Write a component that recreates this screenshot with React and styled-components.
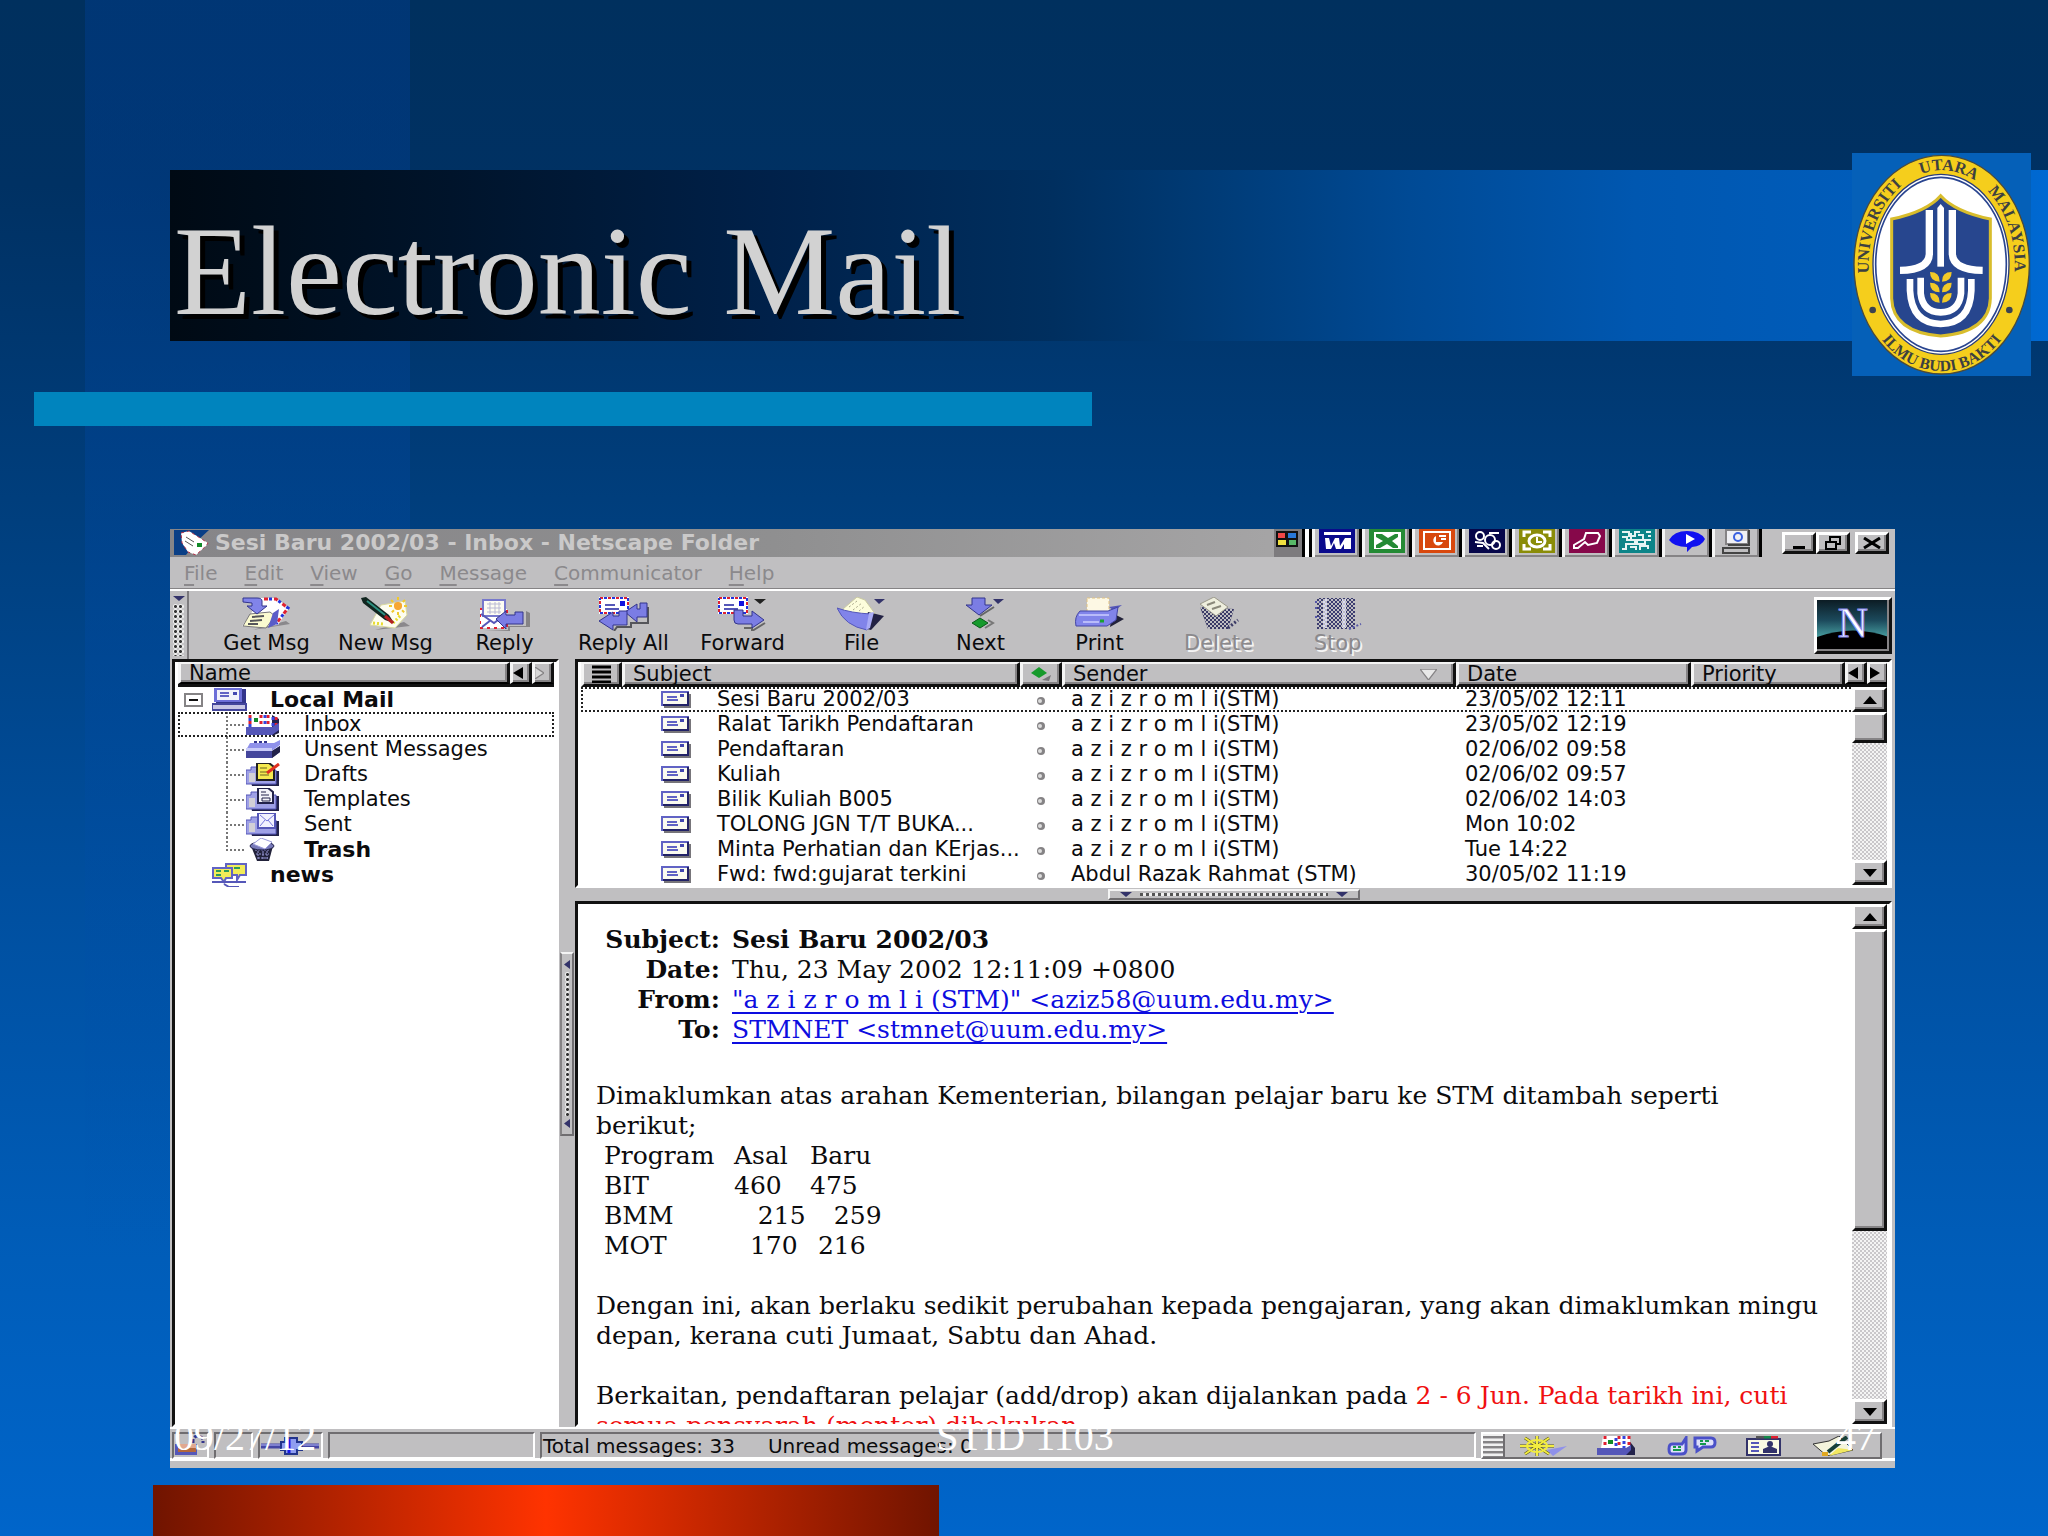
import React from 'react';
import styled, { createGlobalStyle, css } from 'styled-components';

const sans = '"DejaVu Sans", sans-serif';
const serif = '"DejaVu Serif", serif';
const slideSerif = '"Liberation Serif", serif';
const gray = '#c0bfc1';

const Global = createGlobalStyle`
  *, *::before, *::after { box-sizing: border-box; }
  body { margin: 0; }
  button { font: inherit; color: inherit; margin: 0; padding: 0; }
`;

const raised = css`
  background: ${gray};
  border: 3px solid;
  border-color: #fff #111 #111 #fff;
  box-shadow: inset -2px -2px 0 #858385;
`;

const sunken = css`
  border: 2px solid;
  border-color: #6f6d70 #fff #fff #6f6d70;
`;

/* ---------- slide ---------- */

const Slide = styled.div`
  position: relative;
  display: flex;
  flex-direction: column;
  height: 100vh;
  overflow: hidden;
  background:
    linear-gradient(180deg, rgba(0, 66, 160, 0.34), rgba(0, 76, 170, 0.3) 40%, rgba(0, 90, 190, 0) 82%) 85px 0 / 325px 100% no-repeat,
    linear-gradient(180deg, #00305e 0%, #003163 12%, #00376f 22%, #003f7e 34%, #004f9f 58%, #005db9 82%, #0065ca 100%);
`;

const Banner = styled.header`
  position: relative;
  flex: none;
  margin: 170px 0 0 170px;
  padding: 33px 4px 0;
  height: 171px;
  background: linear-gradient(90deg, #000a14 0%, #00142b 15%, #00214a 32%, #002f5f 47%, #003c78 56%, #004a95 66%, #0057b0 78%, #005cba 90%, #0069d2 100%);
`;

const Title = styled.h1`
  margin: 0;
  font: 400 126px/138px ${slideSerif};
  color: #d2d2d2;
  text-shadow: 5px 5px 0 #000;
`;

const Crest = styled.svg`
  position: absolute;
  top: -17px;
  right: 17px;
  width: 179px;
  height: 223px;
`;

const Rule = styled.div`
  flex: none;
  width: 1058px;
  height: 34px;
  margin: 51px 0 103px 34px;
  background: #0084be;
`;

const RedBar = styled.div`
  flex: none;
  width: 786px;
  height: 51px;
  margin: 17px 0 0 153px;
  background: linear-gradient(90deg, #701400, #ff3300 50%, #701400);
`;

const SlideFooter = styled.footer`
  position: absolute;
  left: 174px;
  right: 172px;
  bottom: 77px;
  display: grid;
  grid-template-columns: 1fr auto 1fr;
  font: 400 40px/44px ${slideSerif};
  color: #fff;
  pointer-events: none;
  span:last-child { text-align: right; }
`;

/* ---------- application window ---------- */

const Window = styled.main`
  flex: 1;
  min-height: 0;
  margin: 0 153px 0 170px;
  display: flex;
  flex-direction: column;
  background: ${gray};
  font: 400 21px/25px ${sans};
  color: #0b0b0d;
`;

const TitleBar = styled.div`
  display: flex;
  flex: none;
  align-items: stretch;
  height: 28px;
  padding: 0 6px 0 4px;
  background: linear-gradient(90deg, #868588 0%, #8f8f90 35%, #a6a5a6 65%, #c0bfc1 90%);
`;

const WindowTitle = styled.span`
  flex: 1;
  padding-left: 6px;
  font-size: 22px;
  font-weight: 700;
  line-height: 28px;
  color: #cac9c9;
  white-space: nowrap;
`;

const StartCell = styled.span`
  width: 28px;
  background: #7d7b7e;
`;

const Divider = styled.span`
  width: 10px;
  border-left: 3px solid #000;
  background: #fff;
  border-right: 3px solid #000;
`;

const AppButton = styled.button`
  display: flex;
  justify-content: center;
  width: 50px;
  border: 0;
  border-left: 3px solid #f4f4f4;
  border-right: 3px solid #000;
  background: ${gray};
  box-shadow: inset -2px -2px 0 #858385;
`;

const WindowButtons = styled.div`
  display: flex;
  align-items: flex-end;
  height: 25px;
  padding-left: 20px;
`;

const WindowButton = styled.button`
  ${raised}
  display: grid;
  place-items: center;
  width: 34px;
  height: 22px;
  margin-left: ${(p) => (p.$apart ? '5px' : '0')};
`;

const MenuBar = styled.nav`
  display: flex;
  flex: none;
  gap: 27px;
  height: 32px;
  padding-left: 14px;
  font-size: 20px;
  line-height: 32px;
  color: #8b898c;
`;

const MenuItem = styled.button`
  border: 0;
  background: none;
  &::first-letter { text-decoration: underline; text-underline-offset: 4px; }
`;

const Toolbar = styled.div`
  display: flex;
  flex: none;
  height: 70px;
  border-top: 2px solid #fff;
  box-shadow: 0 -1px 0 #858385;
`;

const Grip = styled.div`
  display: flex;
  flex-direction: column;
  align-items: center;
  width: 19px;
  margin-right: 18px;
  padding-top: 5px;
  border-right: 2px solid #7c7a7d;
`;

const Dots = styled.span`
  flex: 1;
  align-self: stretch;
  margin: 3px;
  background: radial-gradient(circle, #333 1px, #efefef 2px, transparent 3px) 0 0 / 5px 5px;
`;

const ToolButton = styled.button`
  display: flex;
  flex-direction: column;
  align-items: center;
  width: 119px;
  padding-top: 6px;
  border: 0;
  background: none;
  line-height: 24px;
  color: ${(p) => (p.disabled ? '#8b898c' : '#0b0b0d')};
  text-shadow: ${(p) => (p.disabled ? '2px 2px 0 #f4f4f4' : 'none')};
  white-space: nowrap;
`;

const Throbber = styled.div`
  ${raised}
  width: 78px;
  height: 57px;
  margin: 6px 3px 0 auto;
`;

const Workspace = styled.div`
  flex: 1;
  min-height: 0;
  display: flex;
  padding-left: 2px;
`;

const Folders = styled.aside`
  width: 387px;
  flex: none;
  border: 3px solid;
  border-color: #111 #fff #fff #111;
  background: #fff;
  padding: 0 2px 0 3px;
`;

const HeadBar = styled.div`
  display: flex;
  height: 25px;
  border-bottom: 3px solid #111;
`;

const headCell = css`
  background: ${gray};
  border-top: 2px solid #f4f4f4;
  border-left: 3px solid #f4f4f4;
  border-right: 3px solid #111;
  box-shadow: inset -2px -2px 0 #858385;
  font-weight: 400;
  text-align: left;
`;

const HeadButton = styled.button`
  ${headCell}
  flex: ${(p) => (p.$grow ? '1' : '0 0 22px')};
  padding-left: ${(p) => (p.$grow ? '8px' : '0')};
  display: flex;
  align-items: center;
  line-height: 20px;
`;

const Tree = styled.ul`
  list-style: none;
  margin: 0;
  padding: 0;
`;

const TreeRow = styled.div`
  display: flex;
  align-items: center;
  height: 25px;
  padding-left: ${(p) => (p.$level === 2 ? '48px' : p.$expandable ? '6px' : '34px')};
  font-weight: ${(p) => (p.$bold ? 700 : 400)};
  font-size: ${(p) => (p.$bold ? '22px' : '21px')};
  outline: ${(p) => (p.$selected ? '2px dotted #222' : 'none')};
  outline-offset: -2px;
  svg { margin-right: 23px; flex: none; }
`;

const Expander = styled.button`
  display: grid;
  place-items: center;
  width: 19px;
  height: 14px;
  margin-right: 9px;
  border: 2px solid #858385;
  background: #fff;
  &::before { content: ''; width: 9px; height: 2px; background: #111; }
`;

const Branch = styled.span`
  align-self: stretch;
  width: 20px;
  background:
    repeating-linear-gradient(180deg, #777 0 2px, transparent 2px 4px) 0 0 / 2px ${(p) => (p.$last ? '50%' : '100%')} no-repeat,
    repeating-linear-gradient(90deg, #777 0 2px, transparent 2px 4px) 0 50% / 100% 2px no-repeat;
`;

const SideSplitter = styled.div`
  display: flex;
  flex-direction: column;
  flex: none;
  width: 16px;
`;

const SideHandle = styled.div`
  display: flex;
  flex-direction: column;
  align-items: center;
  height: 184px;
  margin: 293px 1px 0;
  padding: 6px 0;
  border: 2px solid;
  border-color: #f4f4f4 #6f6d70 #6f6d70 #858385;
`;

const Right = styled.section`
  flex: 1;
  min-width: 0;
  display: flex;
  flex-direction: column;
  padding-right: 3px;
`;

const ListPane = styled.div`
  flex: none;
  display: grid;
  grid-template-rows: 223px;
  overflow: hidden;
  border: 3px solid;
  border-color: #111 #fff #fff #111;
  background: #fff;
  padding: 0 2px 0 3px;
`;

const Messages = styled.table`
  grid-area: 1 / 1;
  width: 100%;
  table-layout: fixed;
  border-collapse: collapse;
  th, td { padding: 0; height: 25px; line-height: 25px; white-space: nowrap; overflow: hidden; }
  td:nth-child(3) { text-align: center; }
  td:nth-child(4), td:nth-child(5) { padding-left: 9px; }
`;

const ColHead = styled.th`
  > div {
    ${headCell}
    display: flex;
    align-items: center;
    height: 25px;
    border-bottom: 3px solid #111;
    padding: 0 8px;
    line-height: 20px;
  }
`;

const SortMark = styled.span`
  display: flex;
  margin: 0 8px 0 auto;
`;

const ArrowHeads = styled.th`
  > div { display: flex; height: 25px; border-bottom: 3px solid #111; }
`;

const Row = styled.tr`
  outline: ${(p) => (p.$selected ? '2px dotted #222' : 'none')};
  outline-offset: -2px;
`;

const SubjectCell = styled.div`
  display: flex;
  align-items: center;
  gap: 26px;
  padding-left: 39px;
`;

const Scroll = styled.div`
  grid-area: 1 / 1;
  justify-self: end;
  display: flex;
  flex-direction: column;
  width: 35px;
  margin-top: ${(p) => (p.$below ? '25px' : '0')};
  background: repeating-conic-gradient(#c9c7ca 0 25%, #f4f4f4 0 50%) 0 0 / 4px 4px;
`;

const ScrollButton = styled.button`
  ${raised}
  display: grid;
  place-items: center;
  height: 25px;
`;

const Thumb = styled.div`
  ${raised}
  height: ${(p) => p.$size}px;
  margin-bottom: auto;
`;

const Splitter = styled.div`
  flex: none;
  display: flex;
  height: 13px;
  justify-content: center;
  align-items: center;
`;

const Handle = styled.div`
  display: flex;
  align-items: center;
  width: 252px;
  height: 11px;
  padding: 0 10px;
  border: 2px solid;
  border-color: #f4f4f4 #6f6d70 #6f6d70 #f4f4f4;
`;

const DotLine = styled.span`
  flex: 1;
  height: 3px;
  margin: 0 8px;
  background: repeating-linear-gradient(90deg, #555 0 3px, #eee 3px 6px);
`;

const Reader = styled.div`
  flex: 1;
  min-height: 0;
  display: flex;
  border: 3px solid;
  border-color: #111 #fff #fff #111;
  background: #fff;
  padding-right: 2px;
`;

const Letter = styled.article`
  flex: 1;
  min-width: 0;
  overflow: hidden;
  padding: 21px 0 0 18px;
  font: 400 25px/30px ${serif};
  white-space: nowrap;
  p { margin: 0 0 30px; }
`;

const Headers = styled.table`
  border-collapse: collapse;
  margin-bottom: 36px;
  th, td { padding: 0; }
  th { width: 124px; text-align: right; }
  td { padding-left: 12px; }
  tr:first-child td { font-weight: 700; }
  a { color: #0d0de0; text-decoration-thickness: 2px; text-underline-offset: 4px; }
`;

const Programs = styled.table`
  border-collapse: collapse;
  margin-bottom: 30px;
  th, td { padding: 0; text-align: left; font-weight: 400; white-space: pre; }
  th:first-child, td:first-child { padding-left: 8px; width: 138px; }
  th:nth-child(2), td:nth-child(2) { width: 76px; }
`;

const Red = styled.span`
  color: #f01010;
`;

const StatusBar = styled.div`
  flex: none;
  display: flex;
  gap: 5px;
  height: 41px;
  padding: 5px 13px 7px 2px;
  font-size: 20px;
  line-height: 24px;
  background: linear-gradient(180deg, #fff 0 2px, transparent 2px 31px, #fff 31px 34px, transparent 34px);
`;

const StatusCell = styled.div`
  ${sunken}
  display: flex;
  align-items: center;
  width: ${(p) => p.$width};
  flex: ${(p) => (p.$width ? 'none' : '1')};
  height: 27px;
  gap: 33px;
  padding-left: 1px;
  white-space: nowrap;
`;

const Tray = styled.div`
  display: flex;
  flex: none;
  width: 401px;
  height: 27px;
  align-items: center;
  border: 2px solid;
  border-color: #fff #6f6d70 #6f6d70 #fff;
`;

const TrayGrip = styled.span`
  width: 22px;
  height: 23px;
  border-right: 2px solid #6f6d70;
  background: repeating-linear-gradient(180deg, #f0f0f0 0 2px, #858385 2px 4px, ${gray} 4px 5px);
`;

const TrayIcons = styled.div`
  flex: 1;
  display: flex;
  justify-content: space-between;
  padding: 0 26px 0 14px;
  button { display: flex; border: 0; background: none; }
`;

/* ---------- drawings ---------- */

const Tri = ({ dir = 'down', w = 14, h = 8, color = '#000', fill }) => {
  const pts = { down: '0,0 14,0 7,8', up: '0,8 14,8 7,0', left: '14,0 14,8 0,4', right: '0,0 0,8 14,4' }[dir];
  return (
    <svg width={w} height={h} viewBox="0 0 14 8" preserveAspectRatio="none" aria-hidden="true">
      <polygon points={pts} fill={fill || color} stroke={fill ? color : 'none'} />
    </svg>
  );
};

const Envelope = () => (
  <svg width="30" height="17" viewBox="0 0 30 17" aria-hidden="true">
    <path d="M3 3h27v14H3z" fill="#77757a" />
    <path d="M0 0h28v15H0z" fill="#6163c4" />
    <path d="M2 2h24v11H2z" fill="#fbfbf0" />
    <path d="M26 1h2v14H2v-2h24z" fill="#222266" />
    <path d="M6 6h10M6 9h11" stroke="#6163c4" strokeWidth="2" />
    <path d="M19 3h4v3h-4z" fill="#4448b0" />
  </svg>
);

const Airmail = ({ x = 0, y = 0, w = 30, h = 17 }) => (
  <g>
    <rect x={x} y={y} width={w} height={h} fill="#fff" />
    <rect x={x + 1} y={y + 1} width={w - 2} height={h - 2} fill="none" stroke="#e02030" strokeWidth="2" strokeDasharray="3 5" />
    <rect x={x + 1} y={y + 1} width={w - 2} height={h - 2} fill="none" stroke="#2233dd" strokeWidth="2" strokeDasharray="3 5" strokeDashoffset="-4" />
    <path d={`M${x + 6} ${y + 8}h10M${x + 6} ${y + 12}h14`} stroke="#5557b8" strokeWidth="2" />
    <path d={`M${x + w - 9} ${y + 4}h5v5h-5z`} fill="#1111e0" />
  </g>
);

const Mesh = () => (
  <defs>
    <pattern id="mesh" width="4" height="4" patternUnits="userSpaceOnUse">
      <path d="M0 0h2v2H0zM2 2h2v2H2z" fill="#c0bfc1" />
    </pattern>
  </defs>
);

const tools = {
  get: (
    <>
      <path d="M10 33l38-6-4-3z" fill="#8a888c" />
      <path d="M18 1h16l13 10-11 17-26 2-10-1 10-14z" fill="#fff" />
      <path d="M22 2h12l12 9-12 16" fill="none" stroke="#e02030" strokeWidth="3" strokeDasharray="4 6" />
      <path d="M22 2h12l12 9-12 16" fill="none" stroke="#2233dd" strokeWidth="3" strokeDasharray="3 7" strokeDashoffset="-5" />
      <path d="M8 17l20-2 5 4-9 12-23-2z" fill="#fbfbd0" stroke="#77757a" />
      <path d="M31 16l6-4-2 15-9 4z" fill="#5a5cc8" />
      <path d="M10 20l12-1M8 24l12-1M6 27l10 0" stroke="#55555a" strokeWidth="2" />
      <path d="M1 1h14q5 0 5 3v5h5l-10 8L5 9h5V6L1 5z" fill="#8184ea" stroke="#33358c" />
    </>
  ),
  compose: (
    <>
      <path d="M14 33l35-4-6-4z" fill="#8a888c" />
      <path d="M20 8l24-4 2 14-12 13-25-3z" fill="#fdfdf0" stroke="#d8d8a0" />
      <path d="M12 26l10 1M32 26l8-8" stroke="#e8dc30" strokeWidth="3" strokeDasharray="2 2" />
      <path d="M37 0v18M28 9h18M30 3l14 13M44 3L30 16" stroke="#f1c92c" strokeWidth="2" strokeDasharray="3 2" />
      <circle cx="37" cy="9" r="4" fill="#f7a632" />
      <path d="M0 1l5-1 23 18 5 8-9-3L2 6z" fill="#10251f" />
      <path d="M6 4l18 14" stroke="#2d8f80" strokeWidth="2" />
      <path d="M24 19l8 7" stroke="#b42020" strokeWidth="3" />
    </>
  ),
  reply: (
    <>
      <path d="M4 33h24v-4h18V14l4 2v14H30v4z" fill="#858385" />
      <path d="M0 12h27v19H0z" fill="#fff" stroke="#e02030" strokeDasharray="3 4" strokeWidth="2" />
      <path d="M3 3h22v16H3z" fill="#fdfdf2" stroke="#7779cc" strokeWidth="2" />
      <path d="M7 7h14M7 11h14M7 15h14M10 5v12M15 5v12M19 5v12" stroke="#b9b9d4" />
      <path d="M1 17l13 9 12-9M2 30l9-7M26 30l-8-7" fill="none" stroke="#5557b8" strokeWidth="2" />
      <path d="M16 22l10-8v4h9v-3h8v12H26v5z" fill="#7b7de4" stroke="#33358c" />
    </>
  ),
  replyAll: (
    <>
      <path d="M15 34l3-4h14v-4h17V10" fill="none" stroke="#55555a" strokeWidth="2" />
      <Airmail />
      <path d="M26 15l12-8v5h3V6h7v14H38v5z" fill="#7b7de4" stroke="#33358c" />
      <path d="M0 24l14-9v4h6v-5h8v14H14v5z" fill="#7b7de4" stroke="#33358c" />
    </>
  ),
  forward: (
    <>
      <path d="M26 31h8v3l13-8" stroke="#666" strokeWidth="2" fill="none" />
      <Airmail />
      <path d="M16 13h9v6h9v-5l12 9-12 8v-4H20q-4 0-4-4z" fill="#7b7de4" stroke="#33358c" />
      <polygon points="36,2 48,2 42,7" fill="#222" />
    </>
  ),
  file: (
    <>
      <path d="M6 12L20 0l8 3 11 15-30 2z" fill="#fdfddc" stroke="#c9c9a0" />
      <path d="M12 10l8-6M16 13l9-7M22 14l6-5" stroke="#aaa88a" strokeDasharray="2 2" />
      <path d="M31 15l16 4-13 14-8-2z" fill="#222244" />
      <path d="M0 11q14 5 34 6l-4 16Q8 29 0 11z" fill="#8184ea" stroke="#5557b8" />
      <path d="M32 16l5-1-4 16-4 2z" fill="#a9abf5" />
      <polygon points="37,2 48,2 42,7" fill="#33336a" />
    </>
  ),
  next: (
    <>
      <path d="M24 19l14-9" stroke="#666" strokeWidth="2" />
      <path d="M16 1h13v7h7L23 18 10 8h6z" fill="#7b7de4" stroke="#33358c" />
      <path d="M24 21l8 5-8 5-8-5z" fill="#169a2c" stroke="#0a5c18" />
      <path d="M32 23l5 3-8 5" fill="none" stroke="#777" strokeWidth="2" />
      <polygon points="37,2 48,2 42,7" fill="#33336a" />
    </>
  ),
  print: (
    <>
      <path d="M37 16l12 6-14 8z" fill="#22223a" />
      <path d="M12 1h22v15H12z" fill="#fdf8e4" stroke="#e0c080" strokeDasharray="3 2" />
      <path d="M34 10l13-2-8 6z" fill="#5557b8" />
      <path d="M5 14h28l10-4-2 13-9 6H1q-2-9 4-15z" fill="#8184ea" stroke="#4446a4" />
      <path d="M4 18h30M8 25h16" stroke="#b9bbfa" strokeWidth="2" />
      <path d="M25 24h4" stroke="#18a030" strokeWidth="3" />
    </>
  ),
  del: (
    <>
      <Mesh />
      <path d="M6 10l34 2-6 20H14z" fill="#3a3a66" />
      <path d="M6 10l34 2-6 20H14z" fill="url(#mesh)" />
      <path d="M34 31l10-8" stroke="#3a3a66" strokeDasharray="2 2" strokeWidth="3" />
      <path d="M6 7l14-7 14 10-12 9z" fill="#eeeedd" stroke="#9a988a" />
      <path d="M13 8l8-3M18 12l9-3" stroke="#8a887a" strokeWidth="2" />
    </>
  ),
  stop: (
    <>
      <path d="M4 1h38v31H4z" fill="#3c3c70" />
      <path d="M12 2v29M31 2v29" stroke="#d8d8f4" strokeWidth="4" />
      <path d="M4 1h38v31H4z" fill="url(#mesh)" />
      <path d="M2 5h5M2 11h5M2 20h5M36 32l12-5" stroke="#5557a8" strokeWidth="2" strokeDasharray="2 2" />
    </>
  ),
};

const ToolIcon = ({ name }) => (
  <svg width="50" height="34" viewBox="0 0 50 34" aria-hidden="true">{tools[name]}</svg>
);

const FolderBase = () => (
  <>
    <path d="M2 8h6V4h8v4h17v15H6z" fill="#22224a" />
    <path d="M0 7h5V4h9v3h16v14H0z" fill="#9fa1e6" stroke="#5557b8" />
    <path d="M3 10h6v9H3z" fill="#d2d0d6" />
  </>
);

const treeIcons = {
  computer: (
    <>
      <path d="M4 1h30v15H4z" fill="#33358c" />
      <path d="M2 0h28v14H2z" fill="#6d6fd8" />
      <path d="M5 2h22v10H5z" fill="#f2f2fa" />
      <path d="M8 5h9M8 8h9" stroke="#6163c4" strokeWidth="2" /><path d="M21 4h4v3h-4z" fill="#4448b0" />
      <path d="M0 16h34v6H0z" fill="#c9c7e4" stroke="#44469c" strokeWidth="2" />
    </>
  ),
  inbox: (
    <>
      <path d="M26 2l7 4v14l-7 3z" fill="#22224a" />
      <path d="M2 1h24v14H2z" fill="#fff" />
      <path d="M4 2v12M15 2v12M22 2v12M30 4v10" stroke="#e02030" strokeWidth="3" strokeDasharray="3 3" />
      <path d="M4 5v10M19 2v12M27 4v12" stroke="#3344dd" strokeWidth="3" strokeDasharray="3 3" />
      <path d="M8 5h4v4H8z" fill="#128a28" />
      <path d="M0 14h26l7-4v7l-7 5H0z" fill="#5557b8" />
    </>
  ),
  unsent: (
    <>
      <path d="M4 5h24l6-3v5l-7 5H0z" fill="#8f91ea" />
      <path d="M8 4h14" stroke="#33358c" strokeWidth="2" strokeDasharray="3 2" />
      <path d="M0 10h26v3H0z" fill="#c9cbf8" />
      <path d="M0 13h26l8-5v6l-8 6H0z" fill="#44469c" /><path d="M26 13l8-5v6l-8 6z" fill="#22224a" />
    </>
  ),
  drafts: (
    <>
      <FolderBase />
      <path d="M11 0h12l5 4v13H11z" fill="#f5ea50" stroke="#222" strokeWidth="2" />
      <path d="M14 5h7M14 9h9M14 12h9" stroke="#6a6420" strokeWidth="1" />
      <path d="M33 1L21 10" stroke="#e03020" strokeWidth="3" />
    </>
  ),
  templates: (
    <>
      <FolderBase />
      <path d="M12 0h10l5 4v11H12z" fill="#f4f4fa" stroke="#22224a" strokeWidth="2" />
      <path d="M15 4h5M15 7h8M16 10h8v3h-8z" stroke="#22224a" fill="none" />
    </>
  ),
  sent: (
    <>
      <FolderBase />
      <path d="M12 0h17v15H12z" fill="#f2f2ff" stroke="#5557b8" strokeWidth="2" />
      <path d="M14 2l7 6 7-6M14 13l5-6M27 13l-5-6" fill="none" stroke="#7779dd" />
    </>
  ),
  trash: (
    <>
      <path d="M5 8h22l-4 15H11z" fill="#22223a" />
      <path d="M9 12h15M10 16h13M12 20h10M12 10v12M17 10v12M21 10v12" stroke="#9a9ad8" strokeDasharray="2 1" />
      <ellipse cx="16" cy="8" rx="12" ry="4" fill="#7779b8" stroke="#22224a" />
      <path d="M7 6l8-6 11 4-7 7z" fill="#fff" stroke="#9a9ad8" />
    </>
  ),
  news: (
    <>
      <path d="M14 1h20v11h-6l-3 5v-5H14z" fill="#f2ec58" stroke="#6163c4" strokeWidth="2" />
      <path d="M1 5h19v10h-6l-2 4-3-4H1z" fill="#f2ec58" stroke="#6163c4" strokeWidth="2" />
      <path d="M4 8h5M12 8h5M4 12h5M22 5h6" stroke="#2b9a58" strokeWidth="2" />
      <path d="M0 19h34M12 21l5 3h10" fill="none" stroke="#5557b8" strokeWidth="2" />
    </>
  ),
};

const TreeIcon = ({ name }) => (
  <svg width="35" height="24" viewBox="0 0 35 24" aria-hidden="true">{treeIcons[name]}</svg>
);

const appIcons = [
  ['Word', '#0a0a8c', <path key="a" d="M5 3h27v3H5zM6 9h4l2 8 4-8h4l1 8 5-8h6v11h-7v-5l-3 5h-5l-2-6-3 6h-5z" fill="#fff" />],
  ['Excel', '#248a34', <g key="a"><path d="M5 3h27v17H5z" fill="#fff" /><path d="M7 5h6l6 4 7-4h3v3l-6 4 6 5v2h-5l-6-4-7 4H7v-3l7-4-7-4z" fill="#248a34" /></g>],
  ['PowerPoint', '#d8480e', <g key="a"><path d="M5 3h26v17H5z" fill="none" stroke="#fff" strokeWidth="2" /><path d="M17 7a5 5 0 1 0 7 6h-7z" fill="#fff" /><path d="M20 7h7M22 10h5" stroke="#fff" strokeWidth="2" /></g>],
  ['Binder', '#06064a', <g key="a" fill="none" stroke="#fff" strokeWidth="2"><circle cx="11" cy="7" r="4" /><circle cx="21" cy="11" r="5" /><circle cx="27" cy="16" r="4" /><path d="M6 13l8 1 6 6M20 4h10M8 17h6" /></g>],
  ['Outlook', '#8a8c08', <g key="a" fill="none" stroke="#fff" strokeWidth="3"><path d="M5 8V3h7M24 3h7v5M31 15v5h-7M12 20H5v-5" /><ellipse cx="18" cy="12" rx="8" ry="6" strokeWidth="3" /><path d="M18 8v5h5" strokeWidth="2" /></g>],
  ['Access', '#86084a', <g key="a"><path d="M17 4h12l2 3-3 7-9 2-3-3-7 6H5v-3l10-6z" fill="#86084a" stroke="#fff" strokeWidth="2" /></g>],
  ['Maps', '#0c8488', <g key="a" fill="none" stroke="#e6f4f4" strokeWidth="2"><path d="M3 3h7v4h6V3h5M3 8h5v3h8v4H6M3 20h4v-4M19 6h5v5h-6v4h8v-4h6M11 18h6v3M21 21v-4h8v3M27 3h5M29 7h3M12 4v6" /></g>],
];

const AppIcon = ({ color, children }) => (
  <svg width="36" height="25" viewBox="0 0 36 25" aria-hidden="true"><path d="M0 0h36v24H0z" fill={color} />{children}</svg>
);

const UniversityCrest = () => (
  <Crest viewBox="96 69 537 669" preserveAspectRatio="none" role="img" aria-label="Universiti Utara Malaysia, Ilmu Budi Bakti">
    <path d="M96 69h537v669H96z" fill="#0560b8" />
    <ellipse cx="365" cy="404" rx="263" ry="328" fill="#f5ce1c" stroke="#4a4a3c" strokeWidth="4" />
    <ellipse cx="363" cy="403" rx="204" ry="270" fill="#fff" stroke="#2a3c78" strokeWidth="4" />
    <ellipse cx="363" cy="403" rx="196" ry="261" fill="#fff" stroke="#2a4590" strokeWidth="5" />
    <path d="M362 197Q320 245 215 267V505Q218 606 362 618Q508 606 511 505V267Q405 245 362 197Z" fill="#27468e" stroke="#d8bd2c" strokeWidth="9" />
    <g fill="none" stroke="#fff">
      <path d="M328 240V372Q326 420 240 421" strokeWidth="22" />
      <path d="M397 240V372Q400 420 488 421" strokeWidth="22" />
      <path d="M362 234V410" strokeWidth="20" />
      <path d="M270 447V482Q275 580 362 582Q450 580 454 482V447" strokeWidth="20" />
      <path d="M302 443V490Q308 546 362 547Q417 546 423 490V443" strokeWidth="20" />
    </g>
    <path d="M352 234l10-12 10 12z" fill="#fff" />
    <g fill="#f2c928">
      {[428, 460, 491].map((y) => (
        <g key={y}>
          <path d={`M330 ${y - 2}q30 0 29 29q-29 0-29-29z`} />
          <path d={`M395 ${y - 2}q-30 0-29 29q29 0 29-29z`} />
        </g>
      ))}
    </g>
    <circle cx="158" cy="540" r="10" fill="#3b4350" />
    <circle cx="568" cy="540" r="10" fill="#3b4350" />
    <path id="arcTop" d="M171 535A219 283 0 1 1 559 535" fill="none" />
    <path id="arcBottom" d="M144 560A252 314 0 0 0 586 560" fill="none" />
    <g fontFamily='"Liberation Serif", serif' fontSize="49" fontWeight="700" fill="#3d4040" textAnchor="middle">
      <text><textPath href="#arcTop" startOffset="24%">UNIVERSITI</textPath></text>
      <text><textPath href="#arcTop" startOffset="52%">UTARA</textPath></text>
      <text><textPath href="#arcTop" startOffset="77%">MALAYSIA</textPath></text>
      <text fontSize="47"><textPath href="#arcBottom" startOffset="50%">ILMU BUDI BAKTI</textPath></text>
    </g>
  </Crest>
);

/* ---------- data ---------- */

const menus = ['File', 'Edit', 'View', 'Go', 'Message', 'Communicator', 'Help'];

const toolItems = [
  ['get', 'Get Msg'], ['compose', 'New Msg'], ['reply', 'Reply'], ['replyAll', 'Reply All'], ['forward', 'Forward'],
  ['file', 'File'], ['next', 'Next'], ['print', 'Print'], ['del', 'Delete', true], ['stop', 'Stop', true],
];

const folders = [
  ['inbox', 'Inbox'], ['unsent', 'Unsent Messages'], ['drafts', 'Drafts'], ['templates', 'Templates'], ['sent', 'Sent'], ['trash', 'Trash'],
];

const aziz = 'a z i z r o m l i(STM)';
const mails = [
  ['Sesi Baru 2002/03', aziz, '23/05/02 12:11'],
  ['Ralat Tarikh Pendaftaran', aziz, '23/05/02 12:19'],
  ['Pendaftaran', aziz, '02/06/02 09:58'],
  ['Kuliah', aziz, '02/06/02 09:57'],
  ['Bilik Kuliah B005', aziz, '02/06/02 14:03'],
  ['TOLONG JGN T/T BUKA...', aziz, 'Mon 10:02'],
  ['Minta Perhatian dan KErjas...', aziz, 'Tue 14:22'],
  ['Fwd: fwd:gujarat terkini', 'Abdul Razak Rahmat (STM)', '30/05/02 11:19'],
];

const ScrollBar = ({ below, size }) => (
  <Scroll $below={below}>
    <ScrollButton aria-label="Scroll up"><Tri dir="up" /></ScrollButton>
    <Thumb $size={size} />
    <ScrollButton aria-label="Scroll down"><Tri /></ScrollButton>
  </Scroll>
);

export default function App() {
  return (
    <Slide>
      <Global />
      <Banner>
        <Title>Electronic Mail</Title>
        <UniversityCrest />
      </Banner>
      <Rule />

      <Window>
        <TitleBar>
          <svg width="35" height="28" viewBox="0 0 35 28" aria-hidden="true">
            <path d="M0 1h35L22 13 12 26H0z" fill="#0a3f86" />
            <path d="M7 4l8-2 19 12-2 3-10 9-8-3-6-9z" fill="#fff" stroke="#b03048" strokeDasharray="3 3" />
            <path d="M12 8l8 5M11 12l8 5" stroke="#555" strokeWidth="1" />
            <path d="M23 14h5v4h-5z" fill="#128a28" />
          </svg>
          <WindowTitle>Sesi Baru 2002/03 - Inbox - Netscape Folder</WindowTitle>
          <StartCell>
            <svg width="28" height="17" viewBox="0 0 28 17" aria-hidden="true">
              <path d="M2 0h22v16H2z" fill="#111" />
              <path d="M4 2h7v5H4z" fill="#f04848" /><path d="M14 2h8v5h-8z" fill="#2878d8" />
              <path d="M4 9h8v5H4z" fill="#f0e040" /><path d="M15 9h7v5h-7z" fill="#58b868" />
            </svg>
          </StartCell>
          <Divider />
          {appIcons.map(([name, color, art]) => (
            <AppButton key={name} aria-label={name}><AppIcon color={color}>{art}</AppIcon></AppButton>
          ))}
          <AppButton aria-label="Media player">
            <svg width="36" height="25" viewBox="0 0 36 25" aria-hidden="true">
              <path d="M0 11q5-9 18-9t18 8q-3 7-13 8l-5 5v-5Q5 18 0 11z" fill="#1010f0" />
              <polygon points="17,5 26,10 17,15" fill="#fff" />
            </svg>
          </AppButton>
          <AppButton aria-label="Find computer">
            <svg width="30" height="26" viewBox="0 0 30 26" aria-hidden="true">
              <path d="M4 1h22v14H4z" fill="#f0f0f4" stroke="#858385" strokeWidth="2" />
              <circle cx="16" cy="8" r="4" fill="none" stroke="#3a60e0" strokeWidth="2" />
              <path d="M27 1v15H6M1 19h26v5H1z" fill="none" stroke="#444" strokeWidth="2" />
            </svg>
          </AppButton>
          <WindowButtons>
            <WindowButton aria-label="Minimize"><svg width="14" height="12" aria-hidden="true"><path d="M1 9h12v3H1z" /></svg></WindowButton>
            <WindowButton aria-label="Restore">
              <svg width="18" height="14" aria-hidden="true"><path d="M6 5V1h10v7h-4M2 6h10v7H2z" fill="none" stroke="#000" strokeWidth="2" /></svg>
            </WindowButton>
            <WindowButton $apart aria-label="Close">
              <svg width="18" height="12" aria-hidden="true"><path d="M1 1l16 10M17 1L1 11" stroke="#000" strokeWidth="3" /></svg>
            </WindowButton>
          </WindowButtons>
        </TitleBar>

        <MenuBar>{menus.map((m) => <MenuItem key={m}>{m}</MenuItem>)}</MenuBar>

        <Toolbar>
          <Grip><Tri w={12} h={5} color="#33336a" /><Dots /></Grip>
          {toolItems.map(([icon, label, off]) => (
            <ToolButton key={icon} disabled={off}><ToolIcon name={icon} />{label}</ToolButton>
          ))}
          <Throbber>
            <svg width="72" height="51" viewBox="0 0 72 51" role="img" aria-label="Netscape">
              <defs>
                <linearGradient id="sky" x1="0" y1="0" x2="0" y2="1">
                  <stop offset="0" stopColor="#0c1c24" /><stop offset="0.4" stopColor="#1c4a5c" /><stop offset="0.75" stopColor="#4aa3a4" />
                </linearGradient>
              </defs>
              <path d="M0 0h72v51H0z" fill="url(#sky)" />
              <path d="M0 37Q36 24 72 37V51H0z" fill="#000" />
              <text x="36" y="37" textAnchor="middle" fontFamily='"Liberation Serif", serif' fontSize="42" fill="#fff" stroke="#8a8cf0" strokeWidth="1">N</text>
              <path d="M70 0h2v51H0v-2h70z" fill="#858385" />
            </svg>
          </Throbber>
        </Toolbar>

        <Workspace>
          <Folders>
            <HeadBar>
              <HeadButton $grow>Name</HeadButton>
              <HeadButton aria-label="Fewer columns"><Tri dir="left" w={10} h={12} /></HeadButton>
              <HeadButton aria-label="More columns"><Tri dir="right" w={9} h={12} color="#858385" fill="#d8d8d8" /></HeadButton>
            </HeadBar>
            <Tree>
              <li>
                <TreeRow $bold $expandable><Expander aria-label="Collapse Local Mail" /><TreeIcon name="computer" />Local Mail</TreeRow>
                <Tree>
                  {folders.map(([icon, label], i) => (
                    <li key={icon}>
                      <TreeRow $level={2} $selected={i === 0} $bold={icon === 'trash'}>
                        <Branch $last={i === folders.length - 1} /><TreeIcon name={icon} />{label}
                      </TreeRow>
                    </li>
                  ))}
                </Tree>
              </li>
              <li><TreeRow $bold><TreeIcon name="news" />news</TreeRow></li>
            </Tree>
          </Folders>

          <SideSplitter>
            <SideHandle>
              <Tri dir="left" w={6} h={9} color="#33336a" /><Dots /><Tri dir="left" w={6} h={9} color="#33336a" />
            </SideHandle>
          </SideSplitter>

          <Right>
            <ListPane>
              <Messages>
                <colgroup>
                  <col style={{ width: 41 }} /><col style={{ width: 398 }} /><col style={{ width: 42 }} />
                  <col style={{ width: 394 }} /><col style={{ width: 235 }} /><col /><col style={{ width: 42 }} />
                </colgroup>
                <thead>
                  <tr>
                    <ColHead><div><svg width="22" height="18" aria-label="Thread"><path d="M0 2h22M0 7h22M0 12h22M0 17h22" stroke="#000" strokeWidth="3" /></svg></div></ColHead>
                    <ColHead><div>Subject</div></ColHead>
                    <ColHead><div><svg width="20" height="16" aria-label="Unread"><path d="M11 14l9-5-2 6z" fill="#77757a" /><path d="M8 1l8 6-8 5-8-5z" fill="#169a2c" /></svg></div></ColHead>
                    <ColHead><div>Sender<SortMark><Tri w={17} h={11} color="#858385" fill="#e8e8e8" /></SortMark></div></ColHead>
                    <ColHead><div>Date</div></ColHead>
                    <ColHead><div>Priority</div></ColHead>
                    <ArrowHeads>
                      <div>
                        <HeadButton aria-label="Fewer columns"><Tri dir="left" w={10} h={12} /></HeadButton>
                        <HeadButton aria-label="More columns"><Tri dir="right" w={10} h={12} /></HeadButton>
                      </div>
                    </ArrowHeads>
                  </tr>
                </thead>
                <tbody>
                  {mails.map(([subject, sender, date], i) => (
                    <Row key={subject} $selected={i === 0}>
                      <td />
                      <td><SubjectCell><Envelope />{subject}</SubjectCell></td>
                      <td><svg width="9" height="9" aria-label="Read"><circle cx="4" cy="4" r="4" fill="#858385" /><circle cx="3" cy="4" r="2" fill="#ddd" /></svg></td>
                      <td>{sender}</td>
                      <td>{date}</td>
                      <td />
                      <td />
                    </Row>
                  ))}
                </tbody>
              </Messages>
              <ScrollBar below size={31} />
            </ListPane>

            <Splitter>
              <Handle><Tri w={12} h={5} color="#33336a" /><DotLine /><Tri w={12} h={5} color="#33336a" /></Handle>
            </Splitter>

            <Reader>
              <Letter>
                <Headers>
                  <tbody>
                    <tr><th scope="row">Subject:</th><td>Sesi Baru 2002/03</td></tr>
                    <tr><th scope="row">Date:</th><td>Thu, 23 May 2002 12:11:09 +0800</td></tr>
                    <tr><th scope="row">From:</th><td><a href="mailto:aziz58@uum.edu.my">"a z i z r o m l i (STM)" &lt;aziz58@uum.edu.my&gt;</a></td></tr>
                    <tr><th scope="row">To:</th><td><a href="mailto:stmnet@uum.edu.my">STMNET &lt;stmnet@uum.edu.my&gt;</a></td></tr>
                  </tbody>
                </Headers>
                <div>Dimaklumkan atas arahan Kementerian, bilangan pelajar baru ke STM ditambah seperti<br />berikut;</div>
                <Programs>
                  <thead><tr><th>Program</th><th>Asal</th><th>Baru</th></tr></thead>
                  <tbody>
                    <tr><td>BIT</td><td>460</td><td>475</td></tr>
                    <tr><td>BMM</td><td>{'   215'}</td><td>{'   259'}</td></tr>
                    <tr><td>MOT</td><td>{'  170'}</td><td>{' 216'}</td></tr>
                  </tbody>
                </Programs>
                <p>Dengan ini, akan berlaku sedikit perubahan kepada pengajaran, yang akan dimaklumkan mingu<br />depan, kerana cuti Jumaat, Sabtu dan Ahad.</p>
                <p>Berkaitan, pendaftaran pelajar (add/drop) akan dijalankan pada <Red>2 - 6 Jun. Pada tarikh ini, cuti<br />semua pensyarah (mentor) dibekukan.</Red></p>
              </Letter>
              <ScrollBar size={302} />
            </Reader>
          </Right>
        </Workspace>

        <StatusBar>
          <StatusCell $width="37px">
            <svg width="32" height="21" viewBox="0 0 32 21" aria-label="Security">
              <path d="M0 9h22v11H0z" fill="#5557b8" /><path d="M3 9h18v8H3z" fill="#b4683c" /><path d="M3 9h18v4H3z" fill="#e0a890" />
              <path d="M18 8V4q4-6 10 0v4" fill="none" stroke="#33358c" strokeWidth="3" strokeDasharray="4 2" />
            </svg>
          </StatusCell>
          <StatusCell $width="39px" />
          <StatusCell $width="65px">
            <svg width="58" height="18" viewBox="0 0 58 18" aria-label="Online">
              <path d="M0 9h58" stroke="#4446a4" strokeWidth="5" /><path d="M0 8h58" stroke="#b9bbfa" strokeWidth="1" />
              <path d="M20 5h4V1h12v4h5v8h-5v4H24v-4h-4z" fill="#8f9df0" stroke="#22348c" strokeWidth="2" /><path d="M28 2v14" stroke="#1616e8" strokeWidth="3" />
            </svg>
          </StatusCell>
          <StatusCell $width="207px" />
          <StatusCell><span>Total messages: 33</span><span>Unread messages: 0</span></StatusCell>
          <Tray>
            <TrayGrip />
            <TrayIcons>
              <button aria-label="Navigator">
                <svg width="48" height="20" viewBox="0 0 48 20"><path d="M28 14l20-4-14 10z" fill="#8f91ea" /><path d="M18 0v20M1 10h34M6 2l24 16M30 2L6 18" stroke="#5a5818" strokeWidth="3" /><path d="M18 0v20M1 10h34M6 2l24 16M30 2L6 18" stroke="#f2ec40" strokeWidth="2" /><ellipse cx="18" cy="10" rx="10" ry="6" fill="none" stroke="#f2ec40" strokeWidth="2" /></svg>
              </button>
              <button aria-label="Inbox">
                <svg width="40" height="20" viewBox="0 0 40 20"><path d="M30 2l8 10v7H28z" fill="#22224a" /><path d="M6 0h27v12H4z" fill="#fff" /><path d="M8 0v12M22 0v12M32 0v12" stroke="#e02030" strokeWidth="3" strokeDasharray="3 3" /><path d="M19 2v12M27 0v12" stroke="#3344dd" strokeWidth="3" strokeDasharray="3 2" /><path d="M11 4h5v4h-5z" fill="#128a28" /><path d="M0 12h29l5-3v5l-5 5H0z" fill="#5557b8" /></svg>
              </button>
              <button aria-label="Newsgroups">
                <svg width="50" height="20" viewBox="0 0 50 20"><path d="M5 8h10l4-6v12q0 4-5 4H5q-3 0-3-5t3-5z" fill="#dfe0fb" stroke="#4a50c8" strokeWidth="3" /><path d="M28 2h16q4 0 4 4.500t-4 4.500h-8l-6 4v-4h-2z" fill="#dfe0fb" stroke="#4a50c8" strokeWidth="3" /><path d="M6 11h3M11 11h3M6 14h8M33 5h3M38 5h4M33 8h6" stroke="#169a4c" strokeWidth="2" /></svg>
              </button>
              <button aria-label="Address Book">
                <svg width="36" height="20" viewBox="0 0 36 20"><path d="M1 3h33v16H1z" fill="#fbfbe4" stroke="#33336a" strokeWidth="2" /><path d="M10 1h8" stroke="#555" strokeWidth="3" /><path d="M18 1h7" stroke="#128a48" strokeWidth="3" /><path d="M25 1h7" stroke="#e02030" strokeWidth="3" /><path d="M5 7h8M5 11h8M5 15h8" stroke="#5557b8" strokeWidth="2" /><circle cx="24" cy="8" r="3" fill="#33336a" /><path d="M17 17v-4l7-3 7 3v4z" fill="#33336a" /></svg>
              </button>
              <button aria-label="Composer">
                <svg width="42" height="20" viewBox="0 0 42 20"><path d="M1 8l16-3 10-5 14 14-26 6z" fill="#f4f4dc" stroke="#333" /><path d="M26 12l15 2-24 6z" fill="#f2e860" /><path d="M35 1L16 16" stroke="#164038" strokeWidth="4" /><path d="M10 18h6" stroke="#e0a820" strokeWidth="4" /></svg>
              </button>
            </TrayIcons>
          </Tray>
        </StatusBar>
      </Window>

      <RedBar />
      <SlideFooter><span>09/27/12</span><span>STID 1103</span><span>47</span></SlideFooter>
    </Slide>
  );
}
